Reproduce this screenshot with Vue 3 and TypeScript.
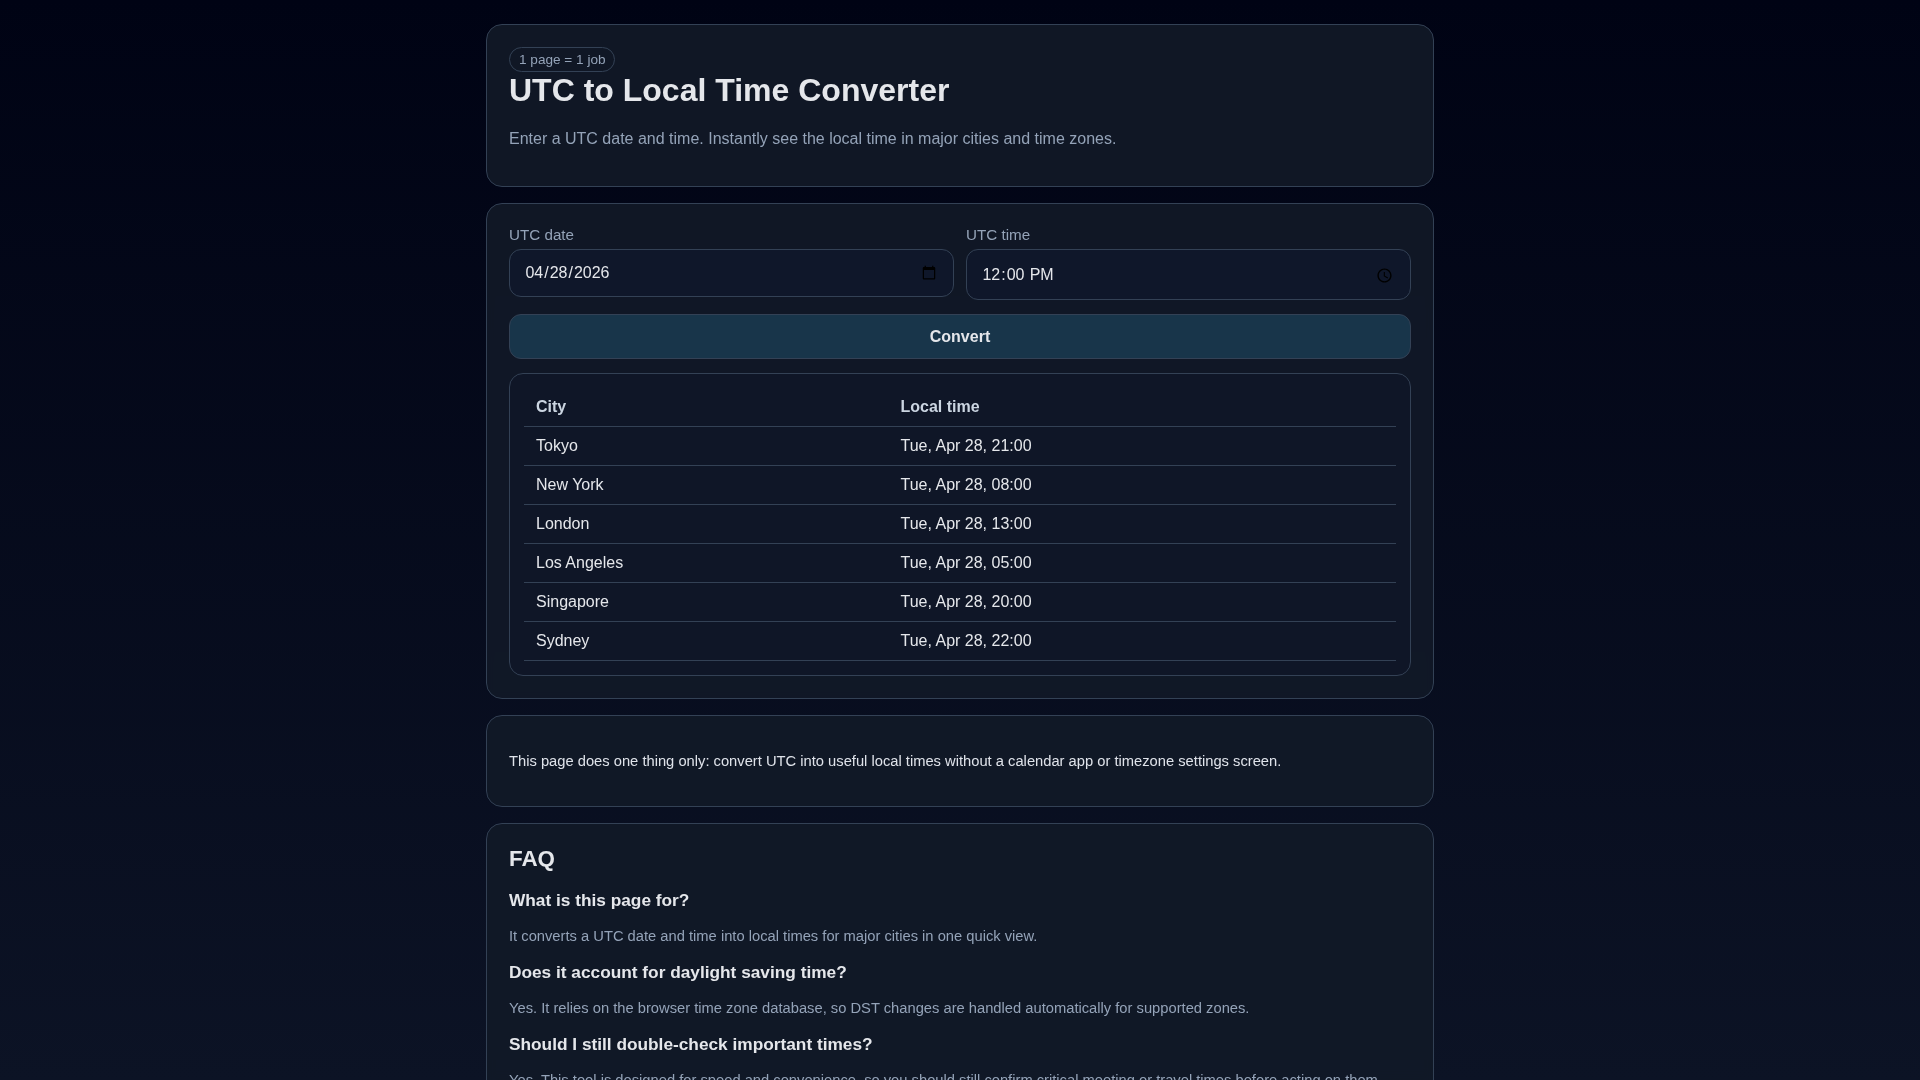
<script setup lang="ts">
import { ref } from 'vue'

const utcDate = ref('2026-04-28')
const utcTime = ref('12:00')

const rows = [
  { city: 'Tokyo', time: 'Tue, Apr 28, 21:00' },
  { city: 'New York', time: 'Tue, Apr 28, 08:00' },
  { city: 'London', time: 'Tue, Apr 28, 13:00' },
  { city: 'Los Angeles', time: 'Tue, Apr 28, 05:00' },
  { city: 'Singapore', time: 'Tue, Apr 28, 20:00' },
  { city: 'Sydney', time: 'Tue, Apr 28, 22:00' },
]

const faqs = [
  { q: 'What is this page for?', a: 'It converts a UTC date and time into local times for major cities in one quick view.' },
  { q: 'Does it account for daylight saving time?', a: 'Yes. It relies on the browser time zone database, so DST changes are handled automatically for supported zones.' },
  { q: 'Should I still double-check important times?', a: 'Yes. This tool is designed for speed and convenience, so you should still confirm critical meeting or travel times before acting on them.' },
]
</script>

<template>
  <main class="wrap">
    <section class="card">
      <span class="badge">1 page = 1 job</span>
      <h1>UTC to Local Time Converter</h1>
      <p class="muted">Enter a UTC date and time. Instantly see the local time in major cities and time zones.</p>
    </section>

    <section class="card">
      <div class="fields">
        <label class="field">
          <span>UTC date</span>
          <input v-model="utcDate" type="date" />
        </label>
        <label class="field">
          <span>UTC time</span>
          <input v-model="utcTime" type="time" />
        </label>
      </div>
      <button type="button" class="convert">Convert</button>
      <div class="result">
        <table>
          <thead>
            <tr><th>City</th><th>Local time</th></tr>
          </thead>
          <tbody>
            <tr v-for="row in rows" :key="row.city">
              <td>{{ row.city }}</td>
              <td>{{ row.time }}</td>
            </tr>
          </tbody>
        </table>
      </div>
    </section>

    <section class="card">
      <p class="note">This page does one thing only: convert UTC into useful local times without a calendar app or timezone settings screen.</p>
    </section>

    <section class="card">
      <h2>FAQ</h2>
      <template v-for="item in faqs" :key="item.q">
        <h3>{{ item.q }}</h3>
        <p class="answer">{{ item.a }}</p>
      </template>
    </section>
  </main>
</template>

<style>
body {
  background: linear-gradient(180deg, #000314 0, #0c1325 1080px) no-repeat #0c1325;
}
</style>

<style scoped>
.wrap {
  max-width: 948px;
  margin: 0 auto;
  padding: 24px 0;
  display: flex;
  flex-direction: column;
  gap: 16px;
  font-family: "Liberation Sans", Arial, sans-serif;
  color: #e5e7eb;
}

.card {
  background: rgba(17, 25, 39, 0.92);
  border: 1px solid #334155;
  border-radius: 16px;
  padding: 22px;
  backdrop-filter: blur(4px);
}

.badge {
  display: block;
  width: fit-content;
  padding: 3px 8px 3px 9px;
  border: 1px solid #334155;
  border-radius: 999px;
  font-size: 13.6px;
  line-height: 17px;
  color: #94a3b8;
}

h1 {
  margin: 0;
  font-size: 32px;
  line-height: 36px;
  font-weight: 700;
}

.muted {
  margin: 22px 0 16px;
  font-size: 16px;
  line-height: 18px;
  color: #94a3b8;
}

.fields {
  display: grid;
  grid-template-columns: 1fr 1fr;
  gap: 12px;
  align-items: start;
}

.field {
  display: flex;
  flex-direction: column;
  gap: 6px;
}

.field span {
  font-size: 15.2px;
  line-height: 17px;
  color: #94a3b8;
}

.field input {
  padding: 12.8px 14.4px;
  background: #0f172a;
  border: 1px solid #334155;
  border-radius: 12px;
  color: #e5e7eb;
  font: 16px "Liberation Sans", Arial, sans-serif;
  box-sizing: border-box;
  width: 100%;
}

.field input[type="time"] {
  height: 51px;
  padding-top: 14px;
  padding-bottom: 12px;
}

.convert {
  display: block;
  width: 100%;
  margin-top: 14.4px;
  height: 45px;
  padding: 0;
  background: #18354a;
  border: 1px solid #334155;
  border-radius: 12px;
  color: #e5e7eb;
  font: 700 16px "Liberation Sans", Arial, sans-serif;
}

.result {
  margin-top: 13.4px;
  padding: 14px;
  background: rgba(15, 23, 42, 0.7);
  border: 1px solid #334155;
  border-radius: 14px;
}

table {
  width: 100%;
  border-collapse: collapse;
  font-size: 16px;
}

th, td {
  padding: 10px 12px;
  text-align: left;
  border-bottom: 1px solid #334155;
  line-height: 18px;
}

th {
  color: #cbd5e1;
  font-weight: 700;
}

td:first-child, th:first-child {
  width: 41.8%;
}

.note {
  margin: 14px 0;
  font-size: 14.72px;
  line-height: 18px;
  color: #dfe3ea;
}

h2 {
  margin: 0 0 19px;
  font-size: 22.4px;
  line-height: 25px;
}

h3 {
  margin: 16px 0 17.4px;
  font-size: 17.28px;
  line-height: 20px;
}

.answer {
  margin: 17.4px 0 16.6px;
  font-size: 14.72px;
  line-height: 18px;
  color: #94a3b8;
}
</style>
